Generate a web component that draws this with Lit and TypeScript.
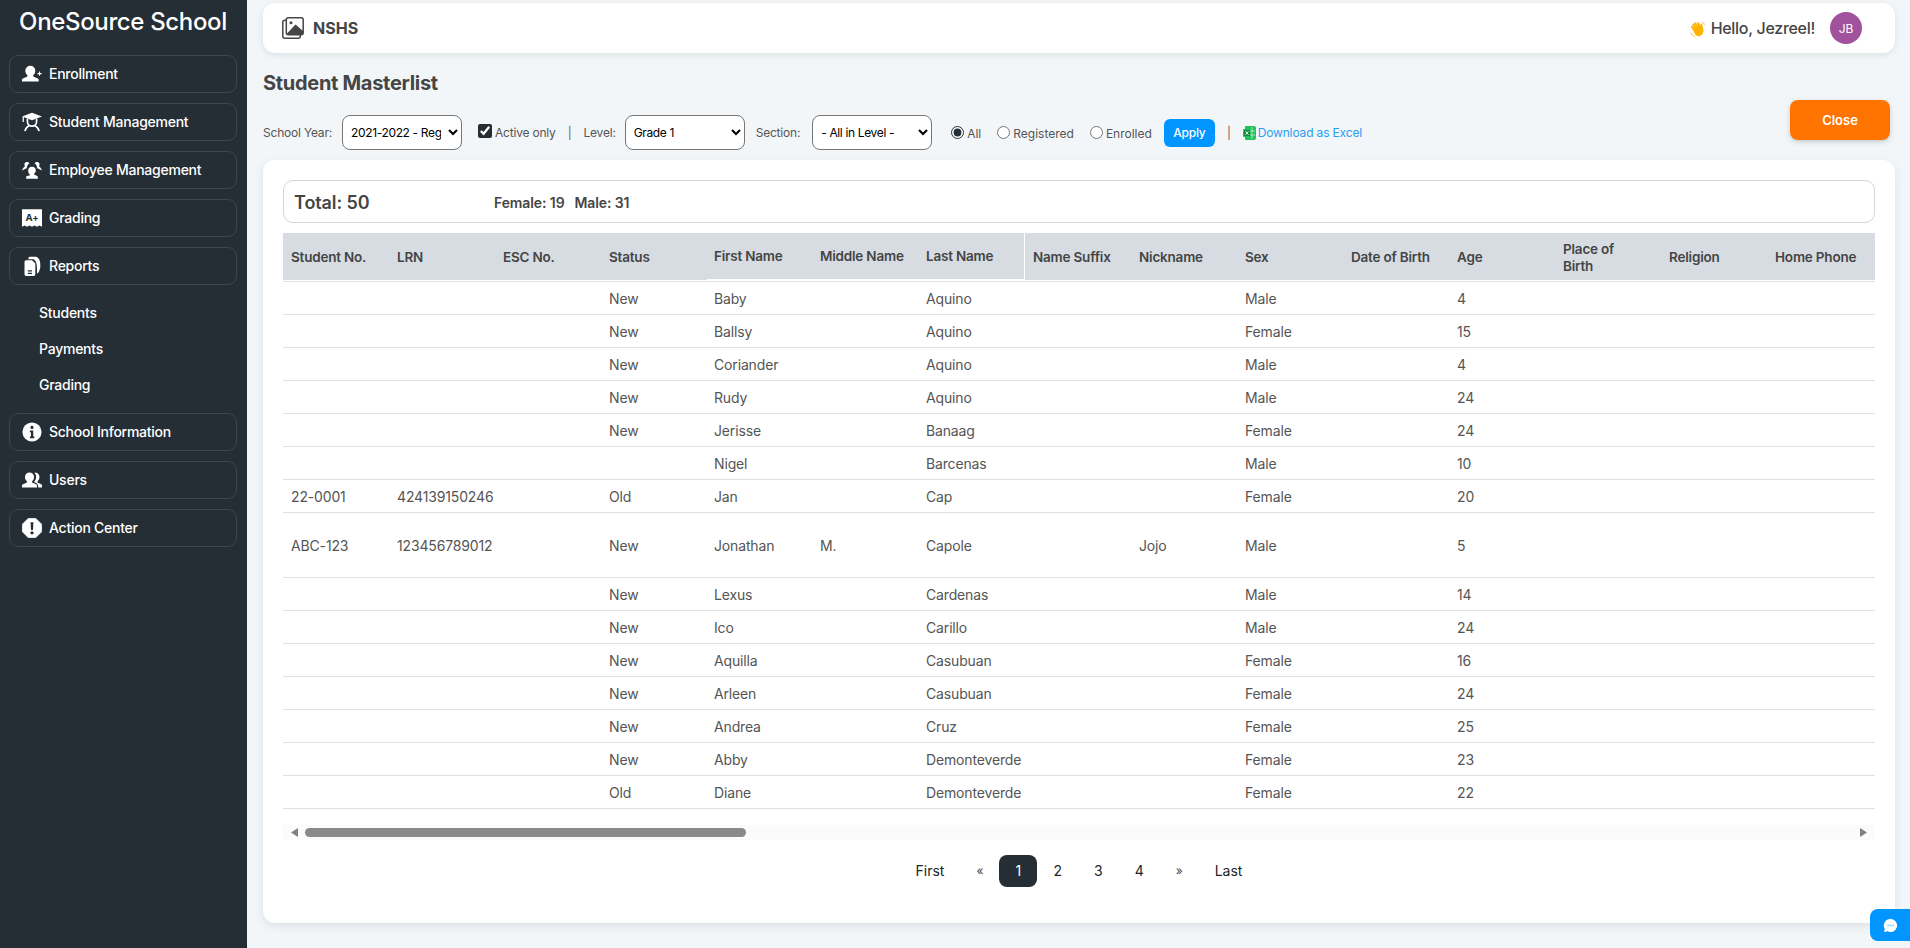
import { LitElement, html, svg, css } from "lit";
import { customElement } from "lit/decorators.js";

const person = "M10 2a6 6 0 0 1 6 6c0 2.4-1 4.2-2.3 5.3-.6.6-.4 1.6.4 2l5 2.2c.6.3.9.9.9 1.6V21H0v-1.900c0-.7.3-1.300.9-1.600l5-2.200c.8-.4 1-1.400.4-2C5 12.200 4 10.400 4 8a6 6 0 0 1 6-6z";

const icons: Record<string, unknown> = {
  enroll: svg`<path d=${person}/><path d="M21 9v5M18.500 11.500h5" stroke="#fff" stroke-width="1.300" fill="none"/>`,
  student: svg`<path d="M12 1 24 5.500 12 10 0 5.500z"/><path d="M1.500 6v6" stroke="#fff" stroke-width="1.500"/><path d="M6.500 8v3.500a5.500 5.500 0 0 0 11 0V8M3.500 23c1-4 3.500-6 5.500-6.800M20.500 23c-1-4-3.500-6-5.500-6.800" fill="none" stroke="#fff" stroke-width="2"/>`,
  staff: svg`<path d="M12 8a4.500 4.500 0 0 1 4.500 4.500c0 1.800-.8 3-1.800 3.800-.4.400-.3 1.100.3 1.400l3.300 1.500c.5.200.7.700.7 1.300v2H5v-2c0-.6.200-1.100.7-1.300L9 18.700c.6-.3.7-1 .3-1.400-1-.8-1.800-2-1.800-3.800A4.500 4.500 0 0 1 12 8z"/><path d="M6 2.500a3.300 3.300 0 0 1 2.900 1.700C7 5.500 6 7 5.800 9.500L5 10.300 0 12.500c1-3 2-3.800 3-4.500.5-.400.500-.8.300-1.200-.8-1-.5-4.300 2.700-4.300zM18 2.500a3.300 3.300 0 0 0-2.900 1.700c1.900 1.300 2.900 2.800 3.100 5.300l.8.800 5 2.200c-1-3-2-3.800-3-4.500-.5-.400-.5-.8-.3-1.200.8-1 .5-4.300-2.700-4.300z"/>`,
  grade: svg`<path d="M0 1.500h24v21l-3-1.500-3 1.500-3-1.500-3 1.500-3-1.500-3 1.500-3-1.500-3 1.500z"/><text x="12" y="16" text-anchor="middle" font-size="11.500" font-weight="700" fill="#252d35" font-family="Inter, sans-serif">A+</text>`,
  report: svg`<path d="M9 1h8c3 1 5 4 5 10s-2 9-4 10c0-7 .5-14-4-17H7.500C7.500 2.500 8 1.500 9 1z"/><path fill-rule="evenodd" d="M5 5h7l4 4v13a2 2 0 0 1-2 2H5a2 2 0 0 1-2-2V7a2 2 0 0 1 2-2zm2 12v1.500h5V17zm0 3v1.500h5V20z"/>`,
  info: svg`<circle cx="12" cy="12" r="11.500"/><path fill="#252d35" d="M12 4.600a1.900 1.900 0 1 1 0 3.800 1.900 1.900 0 0 1 0-3.800zM9.500 10.200h4v7.200h1.300v2H9.500v-2h1.200v-5.200H9.500z"/>`,
  users: svg`<path d="M9 3a5.500 5.500 0 0 1 5.500 5.500c0 2.300-1 3.800-2.200 5-.5.500-.3 1.400.3 1.700l4.400 2c.7.300 1 1 1 1.800V21H0v-2c0-.8.300-1.500 1-1.800l4.400-2c.6-.3.8-1.200.3-1.700-1.200-1.200-2.200-2.700-2.200-5A5.500 5.500 0 0 1 9 3z"/><path d="M15.500 3a5.500 5.500 0 0 1 5.500 5.500c0 2.300-1 3.800-2.200 5-.5.500-.3 1.400.3 1.700l4 2c.6.300.9 1 .9 1.800V21h-4.500c0-2.500-.5-4-2-5l-3-1.600c.8-1.700 2.500-3 2.500-6 0-2-.8-3.600-2-4.800.7-.4 1.500-.6 2.500-.6z"/>`,
  alert: svg`<path d="M7.500 .5h9l7 7v9l-7 7h-9l-7-7v-9z" stroke="#fff" stroke-linejoin="round"/><path fill="#252d35" d="M10.300 5h3.400l-.5 9.500h-2.400zM12 15.800a2 2 0 1 1 0 4 2 2 0 0 1 0-4z"/>`,
};

const nav = [
  { key: "enroll", label: "Enrollment" },
  { key: "student", label: "Student Management" },
  { key: "staff", label: "Employee Management" },
  { key: "grade", label: "Grading" },
  { key: "report", label: "Reports", sub: ["Students", "Payments", "Grading"] },
  { key: "info", label: "School Information" },
  { key: "users", label: "Users" },
  { key: "alert", label: "Action Center" },
];

const columns = [
  "Student No.", "LRN", "ESC No.", "Status", "First Name", "Middle Name", "Last Name",
  "Name Suffix", "Nickname", "Sex", "Date of Birth", "Age", "Place of\nBirth", "Religion", "Home Phone",
];

// no, lrn, esc, status, first, middle, last, suffix, nick, sex, dob, age
const rows = [
  ["", "", "", "New", "Baby", "", "Aquino", "", "", "Male", "", "4"],
  ["", "", "", "New", "Ballsy", "", "Aquino", "", "", "Female", "", "15"],
  ["", "", "", "New", "Coriander", "", "Aquino", "", "", "Male", "", "4"],
  ["", "", "", "New", "Rudy", "", "Aquino", "", "", "Male", "", "24"],
  ["", "", "", "New", "Jerisse", "", "Banaag", "", "", "Female", "", "24"],
  ["", "", "", "", "Nigel", "", "Barcenas", "", "", "Male", "", "10"],
  ["22-0001", "424139150246", "", "Old", "Jan", "", "Cap", "", "", "Female", "", "20"],
  ["ABC-123", "123456789012", "", "New", "Jonathan", "M.", "Capole", "", "Jojo", "Male", "", "5"],
  ["", "", "", "New", "Lexus", "", "Cardenas", "", "", "Male", "", "14"],
  ["", "", "", "New", "Ico", "", "Carillo", "", "", "Male", "", "24"],
  ["", "", "", "New", "Aquilla", "", "Casubuan", "", "", "Female", "", "16"],
  ["", "", "", "New", "Arleen", "", "Casubuan", "", "", "Female", "", "24"],
  ["", "", "", "New", "Andrea", "", "Cruz", "", "", "Female", "", "25"],
  ["", "", "", "New", "Abby", "", "Demonteverde", "", "", "Female", "", "23"],
  ["", "", "", "Old", "Diane", "", "Demonteverde", "", "", "Female", "", "22"],
];

@customElement("app-root")
export class AppRoot extends LitElement {
  static styles = css`
    :host {
      display: flex;
      height: 100vh;
      overflow: hidden;
      background: #f3f6f8;
      color: #454545;
      font-family: Inter, "Noto Sans", sans-serif;
      font-size: 14px;
    }
    aside {
      flex: 0 0 247px;
      background: #252d35;
      color: #fff;
      padding: 0 10px 0 9px;
      box-sizing: border-box;
    }
    .brand {
      font-size: 24px;
      font-weight: 500;
      line-height: 44px;
      text-align: center;
      white-space: nowrap;
      margin-bottom: 11px;
      letter-spacing: -0.35px;
    }
    .item {
      display: flex;
      align-items: center;
      gap: 7px;
      height: 38px;
      box-sizing: border-box;
      border: 1px solid #3f454b;
      border-radius: 9px;
      padding: 0 0 1px 12px;
      margin-bottom: 10px;
      font-weight: 500;
      font-size: 14px;
      letter-spacing: -0.25px;
    }
    .item svg {
      width: 20px;
      height: 20px;
      fill: #fff;
      flex: none;
    }
    .sub {
      padding-left: 30px;
      margin-bottom: 10px;
    }
    .sub div {
      height: 36px;
      line-height: 36px;
      font-weight: 500;
      letter-spacing: -0.25px;
    }
    main {
      flex: 1;
      min-width: 0;
      padding: 3px 15px 0 16px;
    }
    .topbar {
      display: flex;
      align-items: center;
      height: 50px;
      background: #fff;
      border-radius: 12px;
      box-shadow: 0 2px 6px rgba(60, 75, 90, 0.12);
      padding: 0 33px 0 19px;
    }
    .topbar .logo {
      width: 22px;
      height: 22px;
      margin-right: 9px;
      flex: none;
    }
    .school {
      font-size: 16px;
      font-weight: 700;
      flex: 1;
    }
    .hello {
      display: flex;
      align-items: center;
      gap: 5px;
      font-size: 16px;
      font-weight: 500;
      letter-spacing: -0.3px;
      margin-right: 15px;
    }
    .hello svg {
      width: 16px;
      height: 16px;
      margin-top: 2px;
    }
    .avatar {
      width: 32px;
      height: 32px;
      border-radius: 50%;
      background: #a0529c;
      color: #fff;
      font-size: 12px;
      display: grid;
      place-items: center;
    }
    .head {
      display: flex;
      justify-content: space-between;
      height: 107px;
    }
    h1 {
      margin: 0;
      padding-top: 17px;
      font-size: 20px;
      line-height: 26px;
      font-weight: 700;
      color: #454545;
      letter-spacing: -0.3px;
    }
    .filters {
      display: flex;
      align-items: center;
      margin-top: 19px;
      font-size: 12px;
      color: #555;
      white-space: nowrap;
      letter-spacing: -0.2px;
    }
    select {
      width: 120px;
      height: 35px;
      border: 1px solid #767676;
      border-radius: 8px;
      background: #fff;
      color: #000;
      font-family: inherit;
      font-size: 12px;
      padding: 0 4px;
      letter-spacing: -0.35px;
    }
    .filters select.section {
      margin-right: 19px;
    }
    .lbl {
      margin-right: 10px;
    }
    .lbl.level {
      margin-right: 9px;
    }
    .lbl.sec {
      margin: 0 12px 0 11px;
    }
    .check {
      display: flex;
      align-items: center;
      margin-left: 16px;
      gap: 3px;
    }
    input {
      margin: 0;
      accent-color: #252d35;
    }
    input[type="checkbox"] {
      width: 14px;
      height: 14px;
      margin-top: -4px;
    }
    input[type="radio"] {
      width: 13px;
      height: 13px;
      margin-top: -3px;
    }
    .sep {
      margin: 0 12px;
      color: #666;
    }
    .radio {
      display: flex;
      align-items: center;
      gap: 3px;
      margin-right: 16px;
      padding-top: 2px;
      letter-spacing: 0;
    }
    .apply {
      border: 0;
      width: 51px;
      height: 28px;
      margin-left: -4px;
      border-radius: 6px;
      background: #0095ff;
      color: #fff;
      font: 500 12px Inter, sans-serif;
      letter-spacing: -0.2px;
    }
    .excel {
      display: flex;
      align-items: center;
      gap: 2px;
      color: #2a9df4;
      letter-spacing: -0.15px;
    }
    .excel svg {
      width: 13px;
      height: 14px;
    }
    .close {
      margin: 47px 5px 0 0;
      width: 100px;
      height: 40px;
      border: 0;
      border-radius: 8px;
      background: #ff7300;
      color: #fff;
      font: 600 13px Inter, sans-serif;
      box-shadow: 0 2px 5px rgba(60, 75, 90, 0.25);
    }
    .card {
      height: 763px;
      box-sizing: border-box;
      background: #fff;
      border-radius: 12px;
      box-shadow: 0 3px 8px rgba(60, 75, 90, 0.12);
      padding: 20px 20px 0;
    }
    .totals {
      display: flex;
      align-items: center;
      height: 43px;
      box-sizing: border-box;
      border: 1px solid #d2d6da;
      border-radius: 10px;
      padding: 1px 0 0 10px;
      font-weight: 600;
      font-size: 14px;
    }
    .totals b {
      font-size: 18px;
      font-weight: 600;
      width: 200px;
      letter-spacing: -0.1px;
    }
    .totals span {
      margin-right: 10px;
      letter-spacing: -0.1px;
    }
    .scroll {
      margin-top: 10px;
      overflow: hidden;
    }
    table {
      table-layout: fixed;
      border-collapse: separate;
      border-spacing: 0;
      width: 6451px;
    }
    col {
      width: 106px;
    }
    col.rest {
      width: auto;
    }
    th {
      height: 48px;
      box-sizing: border-box;
      background: #d6dce2;
      border-bottom: 1.5px solid #fff;
      padding: 2px 8px 0;
      text-align: left;
      font-weight: 600;
      font-size: 13.500px;
      line-height: 17px;
      letter-spacing: -0.2px;
      color: #454545;
      white-space: pre-line;
    }
    td {
      height: 33px;
      box-sizing: border-box;
      border-bottom: 1px solid #dee2e6;
      padding: 1px 8px 0;
      color: #555;
      font-size: 14px;
      letter-spacing: -0.15px;
      white-space: nowrap;
    }
    tbody tr:first-child td {
      height: 34px;
      border-top: 1px solid #dee2e6;
      padding-top: 1px;
    }
    tr.tall td {
      height: 65px;
    }
    th.pin {
      border-bottom-width: 2.500px;
      padding-left: 7px;
      padding-top: 0;
    }
    td.pin {
      padding-left: 7px;
      padding-top: 0;
    }
    tbody tr:first-child td.pin {
      padding-top: 0;
    }
    th.edge {
      border-right: 1px solid #fff;
    }
    .track {
      display: flex;
      align-items: center;
      height: 15px;
      margin-top: 16px;
      background: #fbfbfb;
    }
    .track svg {
      width: 22px;
      height: 15px;
      fill: #808080;
      flex: none;
    }
    .thumb {
      flex: none;
      width: 441px;
      height: 9px;
      border-radius: 5px;
      background: #8a8a8a;
    }
    .gap {
      flex: 1;
    }
    .pages {
      display: flex;
      justify-content: center;
      align-items: center;
      margin-top: 15px;
      font-size: 14px;
      color: #212529;
    }
    .pages span {
      height: 32px;
      line-height: 32px;
      padding: 0 16px;
      box-sizing: border-box;
    }
    .pages .arrow {
      font-size: 12px;
      color: #454545;
    }
    .pages .on {
      width: 38px;
      padding: 0;
      text-align: center;
      background: #252d35;
      color: #fff;
      border-radius: 8px;
    }
    .chat {
      position: fixed;
      right: 0;
      bottom: 7px;
      width: 40px;
      height: 32px;
      background: #0095ff;
      border-radius: 8px 0 0 8px;
      display: grid;
      place-items: center;
    }
    .chat svg {
      width: 15px;
      height: 15px;
    }
  `;

  render() {
    return html`
      <aside>
        <div class="brand">OneSource School</div>
        ${nav.map(
          (n) => html`
            <div class="item">
              <svg viewBox="0 0 24 24">${icons[n.key]}</svg>${n.label}
            </div>
            ${n.sub ? html`<div class="sub">${n.sub.map((s) => html`<div>${s}</div>`)}</div>` : ""}
          `,
        )}
      </aside>
      <main>
        <div class="topbar">
          <svg class="logo" viewBox="0 0 22 22">
            <rect x=".8" y="3.300" width="17.500" height="17.900" rx="2" fill="none" stroke="#454545" stroke-width="1.500" />
            <rect x="4.300" y=".8" width="16.900" height="16.900" rx="2" fill="#fff" stroke="#454545" stroke-width="1.500" />
            <circle cx="9" cy="5.800" r="1.500" fill="#454545" />
            <path d="M5 16.500 13.500 7.500 21 14v2a1.500 1.500 0 0 1-1.500 1.500H6z" fill="#454545" />
          </svg>
          <div class="school">NSHS</div>
          <div class="hello">
            <svg viewBox="0 0 24 24">
              <g stroke="#ffb300" stroke-linecap="round" fill="none">
                <path d="M6 13.500 3 9M8.500 11 5 5.500M11.500 9.500 8 3.500M15 9l-2.500-5.500" stroke-width="3.200" />
                <path d="M1.500 18l2 3.500M6 22.500l1.500 1M19 1.500 21.500 5" stroke-width="1.300" />
              </g>
              <path d="M5 13l2-3 6-2 2.500-.500.500-3c.2-1 2-1 2.200.2L20 12c1 5-1 9-5 10.500-3.500 1-6.500-.5-8-3.500z" fill="#ffb300" />
            </svg>
            Hello, Jezreel!
          </div>
          <div class="avatar">JB</div>
        </div>
        <div class="head">
          <div>
            <h1>Student Masterlist</h1>
            <div class="filters">
              <span class="lbl">School Year:</span>
              <select><option>2021-2022 - Regular</option></select>
              <label class="check"><input type="checkbox" checked />Active only</label>
              <span class="sep">|</span>
              <span class="lbl level">Level:</span>
              <select><option>Grade 1</option></select>
              <span class="lbl sec">Section:</span>
              <select class="section"><option>- All in Level -</option></select>
              <label class="radio"><input type="radio" name="f" checked />All</label>
              <label class="radio"><input type="radio" name="f" />Registered</label>
              <label class="radio"><input type="radio" name="f" />Enrolled</label>
              <button class="apply">Apply</button>
              <span class="sep">|</span>
              <span class="excel">
                <svg viewBox="0 0 13 14">
                  <path d="M3 0h8a2 2 0 0 1 2 2v10a2 2 0 0 1-2 2H3a1 1 0 0 1-1-1v-2H1a1 1 0 0 1-1-1V4a1 1 0 0 1 1-1h1V1a1 1 0 0 1 1-1z" fill="#21c15a" />
                  <path d="M9 1v12M3 5h9M3 9h9" stroke="#bdf0cd" stroke-width=".8" />
                  <rect x="1" y="4" width="6" height="6" fill="#0f8a3c" />
                  <path d="M2.500 5.200 5.500 8.800M5.500 5.200 2.500 8.800" stroke="#fff" stroke-width=".9" />
                </svg>
                Download as Excel
              </span>
            </div>
          </div>
          <button class="close">Close</button>
        </div>
        <section class="card">
          <div class="totals">
            <b>Total: 50</b>
            <span>Female: 19</span><span>Male: 31</span>
          </div>
          <div class="scroll">
            <table>
              <colgroup>
                ${columns.map(() => html`<col />`)}
                <col class="rest" />
              </colgroup>
              <thead>
                <tr>
                  ${columns.map(
                    (c, i) =>
                      html`<th class="${i >= 4 && i <= 6 ? "pin" : ""} ${i === 6 ? "edge" : ""}">${c}</th>`,
                  )}
                  <th></th>
                </tr>
              </thead>
              <tbody>
                ${rows.map(
                  (r) => html`
                    <tr class=${r[0] === "ABC-123" ? "tall" : ""}>
                      ${columns.map(
                        (_, i) => html`<td class=${i >= 4 && i <= 6 ? "pin" : ""}>${r[i] ?? ""}</td>`,
                      )}
                      <td></td>
                    </tr>
                  `,
                )}
              </tbody>
            </table>
          </div>
          <div class="track">
            <svg viewBox="0 0 22 15"><path d="M8 7.500 15 3v9z" /></svg>
            <div class="thumb"></div>
            <div class="gap"></div>
            <svg viewBox="0 0 22 15"><path d="M14 7.500 7 3v9z" /></svg>
          </div>
          <div class="pages">
            <span>First</span><span class="arrow">«</span><span class="on">1</span><span>2</span
            ><span>3</span><span>4</span><span class="arrow">»</span><span>Last</span>
          </div>
        </section>
      </main>
      <div class="chat">
        <svg viewBox="0 0 16 16">
          <path d="M8 1a7 7 0 1 1-3.200 13.200L1 15l.9-3.400A7 7 0 0 1 8 1z" fill="#fff" />
          <path d="M4.700 8h1.500M7.300 8h1.500M9.900 8h1.500" stroke="#6cbfff" stroke-width="1.500" />
        </svg>
      </div>
    `;
  }
}
